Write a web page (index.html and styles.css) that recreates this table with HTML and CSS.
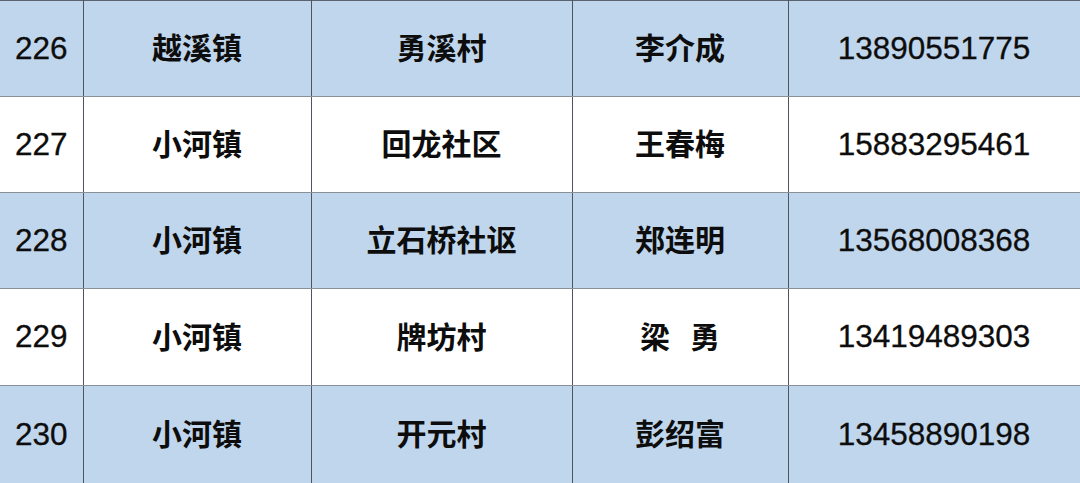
FILE: index.html
```html
<!DOCTYPE html>
<html lang="zh">
<head>
<meta charset="utf-8">
<link rel="stylesheet" href="styles.css">
</head>
<body>
<table class="tbl">
  <colgroup>
    <col class="c1"><col class="c2"><col class="c3"><col class="c4"><col class="c5">
  </colgroup>
  <tr class="blue r1">
    <td class="num">226</td><td class="cn">越溪镇</td><td class="cn">勇溪村</td><td class="cn">李介成</td><td class="num">13890551775</td>
  </tr>
  <tr class="white r2">
    <td class="num">227</td><td class="cn">小河镇</td><td class="cn">回龙社区</td><td class="cn">王春梅</td><td class="num">15883295461</td>
  </tr>
  <tr class="blue r3">
    <td class="num">228</td><td class="cn">小河镇</td><td class="cn">立石桥社讴</td><td class="cn">郑连明</td><td class="num">13568008368</td>
  </tr>
  <tr class="white r4">
    <td class="num">229</td><td class="cn">小河镇</td><td class="cn">牌坊村</td><td class="cn">梁<span class="gap"></span>勇</td><td class="num">13419489303</td>
  </tr>
  <tr class="blue r5">
    <td class="num">230</td><td class="cn">小河镇</td><td class="cn">开元村</td><td class="cn">彭绍富</td><td class="num">13458890198</td>
  </tr>
</table>
</body>
</html>
```

FILE: styles.css
```css
html, body {
  margin: 0;
  padding: 0;
  background: #ffffff;
}
.tbl {
  border-collapse: collapse;
  table-layout: fixed;
  width: 1080px;
  border-top: 1px solid #5a6470;
  border-right: 1px solid #5a6470;
}
.c1 { width: 83px; }
.c2 { width: 228px; }
.c3 { width: 261px; }
.c4 { width: 216px; }
.c5 { width: 292px; }
.tbl td {
  padding: 0;
  text-align: center;
  vertical-align: middle;
  border-left: 1px solid #4e5560;
  border-bottom: 1px solid #8a9098;
  color: #0d0d0d;
}
.tbl td:first-child { border-left: none; }
.r1 td { height: 90px; }
.r2 td { height: 90px; }
.r3 td { height: 90px; }
.r4 td { height: 91px; }
.r5 td { height: 92px; }
.blue td { background: #c0d6ec; }
.white td { background: #ffffff; }
.tbl td.num {
  font-family: "Liberation Sans", Arial, sans-serif;
  font-size: 31.5px;
  font-weight: normal;
  padding-top: 2px;
  padding-bottom: 3px;
  -webkit-text-stroke: 0.3px #0d0d0d;
}
.tbl td.cn {
  font-family: "Noto Sans CJK SC", sans-serif;
  font-size: 30px;
  font-weight: bold;
  padding-bottom: 5px;
}
.gap {
  display: inline-block;
  width: 20px;
}
```
